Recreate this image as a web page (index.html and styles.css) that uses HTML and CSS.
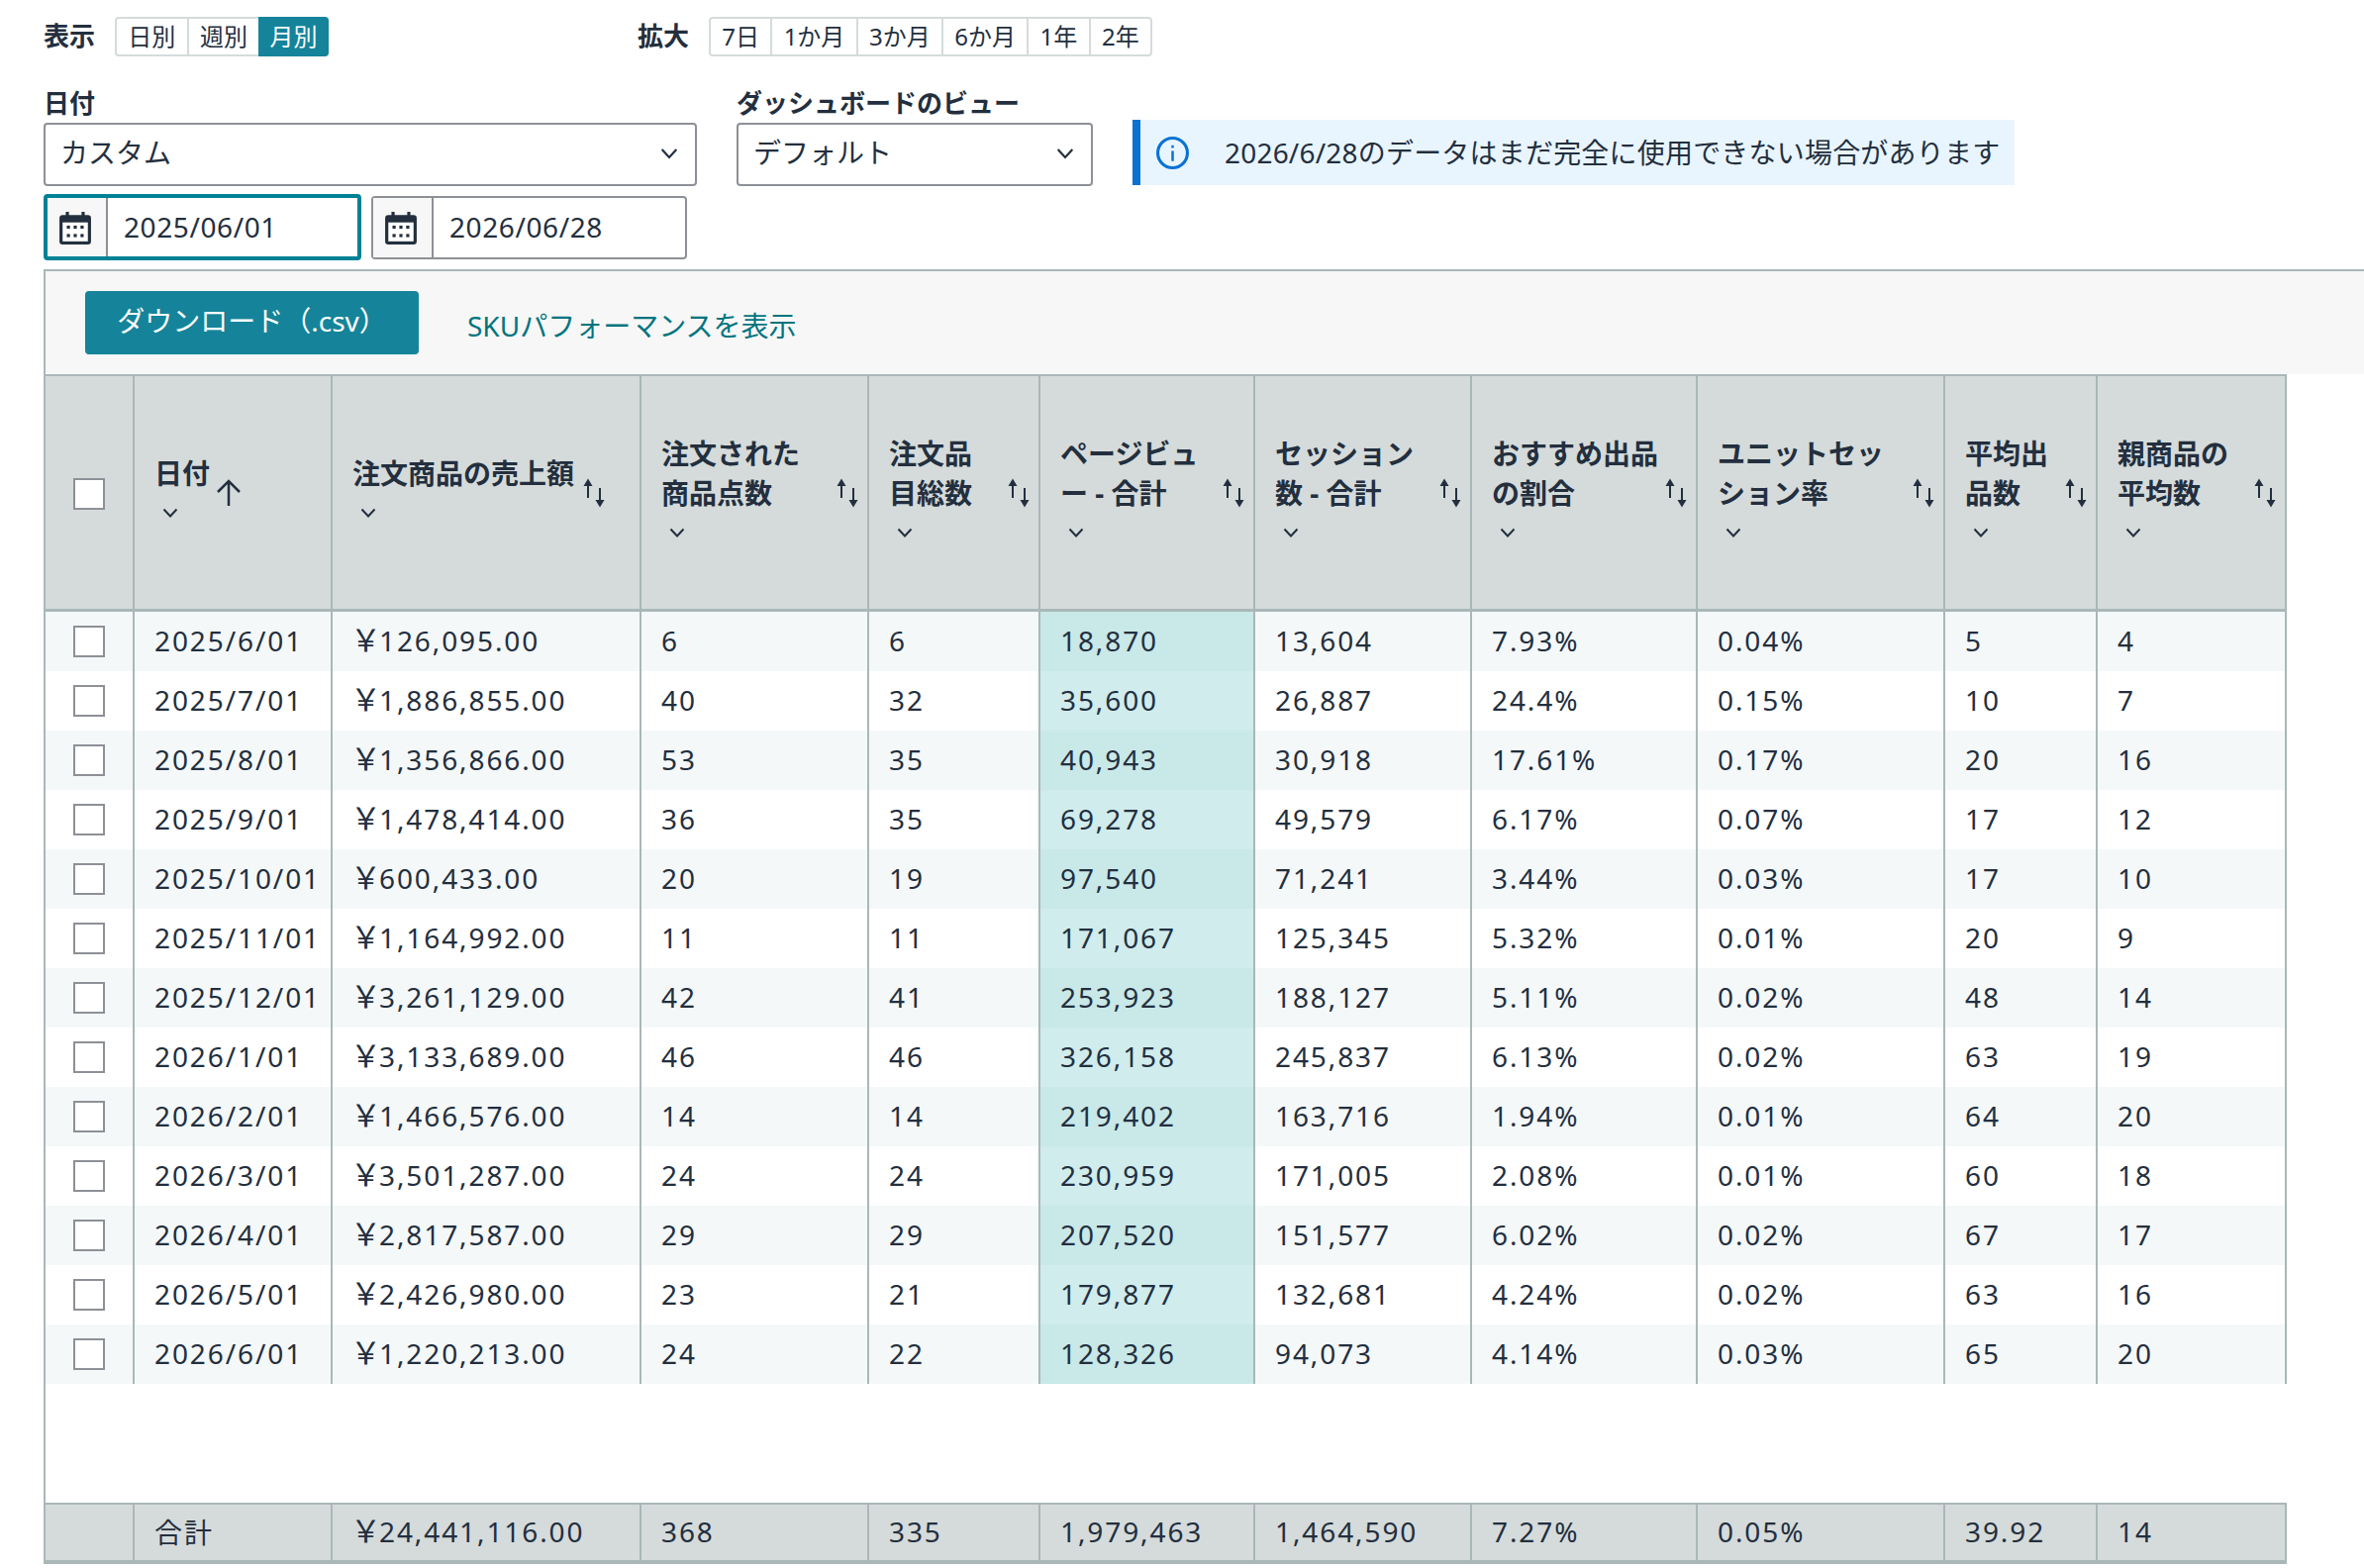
FILE: index.html
```html
<!DOCTYPE html>
<html lang="ja">
<head>
    <meta charset="UTF-8">
    <title>ビジネスレポート</title>
    <link rel="stylesheet" href="styles.css">
</head>
<body>

    <svg class="sprites" width="0" height="0">
        <symbol id="chevron" viewBox="0 0 16 10">
            <path d="M1.5 1.5 L8 8.5 L14.5 1.5" fill="none" stroke="currentColor" stroke-width="2"/>
        </symbol>
        <symbol id="sort" viewBox="0 0 24 30">
            <path d="M6 20 V6" fill="none" stroke="currentColor" stroke-width="2"/>
            <path d="M1.5 8 L6 0.500 L10.5 8 Z" fill="currentColor"/>
            <path d="M18 10 V24" fill="none" stroke="currentColor" stroke-width="2"/>
            <path d="M13.5 22 L18 29.500 L22.5 22 Z" fill="currentColor"/>
        </symbol>
        <symbol id="calendar" viewBox="0 0 32 32">
            <path d="M7 1 h3 v3 h12 v-3 h3 v3 h3 a3 3 0 0 1 3 3 v22 a3 3 0 0 1 -3 3 h-24 a3 3 0 0 1 -3 -3 v-22 a3 3 0 0 1 3 -3 h3 Z" fill="#232f3e"/>
            <rect x="4" y="11" width="24" height="18" fill="#fff"/>
            <g fill="#232f3e">
                <rect x="8" y="14" width="3" height="3"/><rect x="14.500" y="14" width="3" height="3"/><rect x="21" y="14" width="3" height="3"/>
                <rect x="8" y="22" width="3" height="3"/><rect x="14.500" y="22" width="3" height="3"/><rect x="21" y="22" width="3" height="3"/>
            </g>
        </symbol>
    </svg>

    <!-- View and zoom -->
    <div class="toolbar">
        <div class="toolbar-group view-group">
            <span class="toolbar-label">表示</span>
            <div class="segments">
                <span class="seg">日別</span>
                <span class="seg">週別</span>
                <span class="seg active">月別</span>
            </div>
        </div>
        <div class="toolbar-group">
            <span class="toolbar-label">拡大</span>
            <div class="segments">
                <span class="seg">7日</span>
                <span class="seg">1か月</span>
                <span class="seg">3か月</span>
                <span class="seg">6か月</span>
                <span class="seg">1年</span>
                <span class="seg">2年</span>
            </div>
        </div>
    </div>

    <!-- Filters -->
    <div class="filters">
        <div class="date-filter">
            <label class="field-label">日付</label>
            <div class="select wide">カスタム<svg class="select-arrow"><use href="#chevron"/></svg></div>
            <div class="date-row">
                <div class="date-input focused">
                    <span class="date-icon"><svg class="calendar"><use href="#calendar"/></svg></span>
                    <span class="date-value">2025/06/01</span>
                </div>
                <div class="date-input">
                    <span class="date-icon"><svg class="calendar"><use href="#calendar"/></svg></span>
                    <span class="date-value">2026/06/28</span>
                </div>
            </div>
        </div>
        <div class="view-filter">
            <label class="field-label">ダッシュボードのビュー</label>
            <div class="select narrow">デフォルト<svg class="select-arrow"><use href="#chevron"/></svg></div>
        </div>
        <div class="notice">
            <svg class="notice-icon" viewBox="0 0 32 32">
                <circle cx="16" cy="16" r="14.500" fill="none" stroke="#0972d3" stroke-width="3"/>
                <rect x="14.800" y="14" width="2.400" height="10" fill="#0972d3"/>
                <rect x="14.800" y="8.500" width="2.400" height="2.600" fill="#0972d3"/>
            </svg>
            <span class="notice-text">2026/6/28のデータはまだ完全に使用できない場合があります</span>
        </div>
    </div>

    <!-- Report -->
    <div class="report">
        <div class="report-actions">
            <button class="download">ダウンロード（.csv）</button>
            <a class="sku-link">SKUパフォーマンスを表示</a>
        </div>
        <table class="report-table">
            <colgroup>
                <col class="c-check"><col class="c-date"><col class="c-sales"><col class="c-items"><col class="c-total">
                <col class="c-views"><col class="c-sessions"><col class="c-offer"><col class="c-rate"><col class="c-avg"><col class="c-parent">
            </colgroup>
            <thead>
                <tr>
                    <th class="check-cell"><input type="checkbox"></th>
                    <th><div class="head"><div class="head-label fit">日付<svg class="head-chevron"><use href="#chevron"/></svg></div>
                        <svg class="sorted" viewBox="0 0 26 28"><path d="M13 27 V2 M2 13 L13 2 L24 13" fill="none" stroke="currentColor" stroke-width="2.500"/></svg></div></th>
                    <th><div class="head"><div class="head-label fit">注文商品の売上額<svg class="head-chevron"><use href="#chevron"/></svg></div><svg class="sort"><use href="#sort"/></svg></div></th>
                    <th><div class="head"><div class="head-label">注文された<br>商品点数<svg class="head-chevron"><use href="#chevron"/></svg></div><svg class="sort"><use href="#sort"/></svg></div></th>
                    <th><div class="head"><div class="head-label">注文品<br>目総数<svg class="head-chevron"><use href="#chevron"/></svg></div><svg class="sort"><use href="#sort"/></svg></div></th>
                    <th><div class="head"><div class="head-label">ページビュ<br>ー - 合計<svg class="head-chevron"><use href="#chevron"/></svg></div><svg class="sort"><use href="#sort"/></svg></div></th>
                    <th><div class="head"><div class="head-label">セッション<br>数 - 合計<svg class="head-chevron"><use href="#chevron"/></svg></div><svg class="sort"><use href="#sort"/></svg></div></th>
                    <th><div class="head"><div class="head-label">おすすめ出品<br>の割合<svg class="head-chevron"><use href="#chevron"/></svg></div><svg class="sort"><use href="#sort"/></svg></div></th>
                    <th><div class="head"><div class="head-label">ユニットセッ<br>ション率<svg class="head-chevron"><use href="#chevron"/></svg></div><svg class="sort"><use href="#sort"/></svg></div></th>
                    <th><div class="head"><div class="head-label">平均出<br>品数<svg class="head-chevron"><use href="#chevron"/></svg></div><svg class="sort"><use href="#sort"/></svg></div></th>
                    <th><div class="head"><div class="head-label">親商品の<br>平均数<svg class="head-chevron"><use href="#chevron"/></svg></div><svg class="sort"><use href="#sort"/></svg></div></th>
                </tr>
            </thead>
            <tbody>
                <tr><td class="check-cell"><input type="checkbox"></td><td>2025/6/01</td><td><span class="yen">￥</span>126,095.00</td><td>6</td><td>6</td><td class="hl">18,870</td><td>13,604</td><td>7.93%</td><td>0.04%</td><td>5</td><td>4</td></tr>
                <tr><td class="check-cell"><input type="checkbox"></td><td>2025/7/01</td><td><span class="yen">￥</span>1,886,855.00</td><td>40</td><td>32</td><td class="hl">35,600</td><td>26,887</td><td>24.4%</td><td>0.15%</td><td>10</td><td>7</td></tr>
                <tr><td class="check-cell"><input type="checkbox"></td><td>2025/8/01</td><td><span class="yen">￥</span>1,356,866.00</td><td>53</td><td>35</td><td class="hl">40,943</td><td>30,918</td><td>17.61%</td><td>0.17%</td><td>20</td><td>16</td></tr>
                <tr><td class="check-cell"><input type="checkbox"></td><td>2025/9/01</td><td><span class="yen">￥</span>1,478,414.00</td><td>36</td><td>35</td><td class="hl">69,278</td><td>49,579</td><td>6.17%</td><td>0.07%</td><td>17</td><td>12</td></tr>
                <tr><td class="check-cell"><input type="checkbox"></td><td>2025/10/01</td><td><span class="yen">￥</span>600,433.00</td><td>20</td><td>19</td><td class="hl">97,540</td><td>71,241</td><td>3.44%</td><td>0.03%</td><td>17</td><td>10</td></tr>
                <tr><td class="check-cell"><input type="checkbox"></td><td>2025/11/01</td><td><span class="yen">￥</span>1,164,992.00</td><td>11</td><td>11</td><td class="hl">171,067</td><td>125,345</td><td>5.32%</td><td>0.01%</td><td>20</td><td>9</td></tr>
                <tr><td class="check-cell"><input type="checkbox"></td><td>2025/12/01</td><td><span class="yen">￥</span>3,261,129.00</td><td>42</td><td>41</td><td class="hl">253,923</td><td>188,127</td><td>5.11%</td><td>0.02%</td><td>48</td><td>14</td></tr>
                <tr><td class="check-cell"><input type="checkbox"></td><td>2026/1/01</td><td><span class="yen">￥</span>3,133,689.00</td><td>46</td><td>46</td><td class="hl">326,158</td><td>245,837</td><td>6.13%</td><td>0.02%</td><td>63</td><td>19</td></tr>
                <tr><td class="check-cell"><input type="checkbox"></td><td>2026/2/01</td><td><span class="yen">￥</span>1,466,576.00</td><td>14</td><td>14</td><td class="hl">219,402</td><td>163,716</td><td>1.94%</td><td>0.01%</td><td>64</td><td>20</td></tr>
                <tr><td class="check-cell"><input type="checkbox"></td><td>2026/3/01</td><td><span class="yen">￥</span>3,501,287.00</td><td>24</td><td>24</td><td class="hl">230,959</td><td>171,005</td><td>2.08%</td><td>0.01%</td><td>60</td><td>18</td></tr>
                <tr><td class="check-cell"><input type="checkbox"></td><td>2026/4/01</td><td><span class="yen">￥</span>2,817,587.00</td><td>29</td><td>29</td><td class="hl">207,520</td><td>151,577</td><td>6.02%</td><td>0.02%</td><td>67</td><td>17</td></tr>
                <tr><td class="check-cell"><input type="checkbox"></td><td>2026/5/01</td><td><span class="yen">￥</span>2,426,980.00</td><td>23</td><td>21</td><td class="hl">179,877</td><td>132,681</td><td>4.24%</td><td>0.02%</td><td>63</td><td>16</td></tr>
                <tr><td class="check-cell"><input type="checkbox"></td><td>2026/6/01</td><td><span class="yen">￥</span>1,220,213.00</td><td>24</td><td>22</td><td class="hl">128,326</td><td>94,073</td><td>4.14%</td><td>0.03%</td><td>65</td><td>20</td></tr>
                <tr class="spacer"><td colspan="11"></td></tr>
            </tbody>
            <tfoot>
                <tr>
                    <td class="check-cell"></td><td>合計</td><td><span class="yen">￥</span>24,441,116.00</td><td>368</td><td>335</td><td>1,979,463</td><td>1,464,590</td><td>7.27%</td><td>0.05%</td><td>39.92</td><td>14</td>
                </tr>
            </tfoot>
        </table>
    </div>

</body>
</html>
```

FILE: styles.css
```css
* {
    box-sizing: border-box;
}

body {
    margin: 0;
    padding: 17px 0 0 44px;
    background: #fff;
    color: #232f3e;
    font-family: "Noto Sans", "Noto Sans CJK JP", sans-serif;
    font-size: 28px;
}

.sprites {
    position: absolute;
}

/* View and zoom */
.toolbar {
    display: flex;
    height: 40px;
}

.toolbar-group {
    display: flex;
    align-items: center;
}

.view-group {
    width: 600px;
}

.toolbar-label {
    width: 72px;
    padding-bottom: 4px;
    font-size: 26px;
    font-weight: 700;
}

.segments {
    display: flex;
    height: 40px;
    border: 2px solid #d5dbdb;
    border-radius: 4px;
}

.seg {
    display: flex;
    align-items: center;
    justify-content: center;
    padding: 0 11.300px 3px;
    border-left: 2px solid #d5dbdb;
    font-size: 24px;
}

.seg:first-child {
    border-left: none;
}

.seg.active {
    margin: -2px -2px -2px 0;
    border-left: none;
    border-radius: 0 4px 4px 0;
    background: #15849a;
    color: #fff;
}

/* Filters */
.filters {
    display: flex;
    align-items: flex-start;
    margin-top: 30px;
}

.date-filter {
    width: 700px;
}

.view-filter {
    width: 400px;
}

.field-label {
    display: block;
    height: 37px;
    font-size: 26px;
    font-weight: 700;
    line-height: 34px;
}

.select {
    display: flex;
    align-items: center;
    justify-content: space-between;
    height: 64px;
    padding: 0 17px 6px 15px;
    border: 2px solid #8d9096;
    border-radius: 4px;
    background: #fff;
}

.select.wide {
    width: 660px;
}

.select.narrow {
    width: 360px;
}

.select-arrow {
    width: 18px;
    height: 12px;
    margin-top: 4px;
}

.date-row {
    display: flex;
    align-items: center;
    gap: 10px;
    margin-top: 8px;
}

.date-input {
    display: flex;
    width: 319px;
    height: 64px;
    border: 2px solid #8d9096;
    border-radius: 4px;
}

.date-input.focused {
    width: 321px;
    height: 67px;
    border: 4px solid #008296;
}

.date-icon {
    display: flex;
    align-items: center;
    justify-content: center;
    width: 61px;
    padding-right: 3px;
    border-right: 2px solid #8d9096;
    background: #f7f7f7;
}

.calendar {
    width: 34px;
    height: 34px;
    flex: none;
}

.date-value {
    padding-left: 16px;
    letter-spacing: 0.6px;
    line-height: 58px;
}

.notice {
    display: flex;
    align-items: center;
    width: 891px;
    height: 66px;
    margin-top: 34px;
    padding-left: 16px;
    border-left: 8px solid #0972d3;
    background: #e9f5fe;
    letter-spacing: 0.2px;
    white-space: nowrap;
}

.notice-icon {
    width: 33px;
    height: 33px;
    margin-right: 36px;
    flex: none;
}

.notice-text {
    padding-bottom: 2px;
}

/* Report */
.report {
    margin-top: 9px;
    border-top: 2px solid #aab7b8;
    border-left: 2px solid #aab7b8;
}

.report-actions {
    display: flex;
    align-items: flex-start;
    height: 104px;
    padding: 20px 0 0 40px;
    background: #f7f7f7;
}

.download {
    width: 337px;
    height: 64px;
    padding: 0 0 6px;
    border: none;
    border-radius: 4px;
    background: #15849a;
    color: #fff;
    font: inherit;
}

.sku-link {
    margin: 14px 0 0 49px;
    color: #00747f;
}

.report-table {
    table-layout: fixed;
    width: 2264px;
    border-collapse: separate;
    border-spacing: 0;
}

.c-check { width: 90px; }
.c-date { width: 200px; }
.c-sales { width: 312px; }
.c-items { width: 230px; }
.c-total { width: 173px; }
.c-views { width: 217px; }
.c-sessions { width: 219px; }
.c-offer { width: 228px; }
.c-rate { width: 250px; }
.c-avg { width: 154px; }
.c-parent { width: 191px; }

th {
    height: 240px;
    padding: 0 8px 0 20px;
    border-top: 2px solid #aab7b8;
    border-right: 2px solid #aab7b8;
    border-bottom: 3px solid #aab7b8;
    background: #d5dbdb;
    font-size: 28px;
    font-weight: 700;
    line-height: 40px;
    text-align: left;
}

.head {
    display: flex;
    align-items: center;
}

.head-label {
    flex: 1;
    min-width: 0;
    white-space: nowrap;
}

.head-label.fit {
    flex: none;
}

.head-chevron {
    display: block;
    width: 16px;
    height: 10px;
    margin: 15px 0 15px 8px;
}

.sort {
    width: 24px;
    height: 30px;
    margin-left: 8px;
    flex: none;
}

.sorted {
    width: 26px;
    height: 28px;
    margin-left: 6px;
    flex: none;
}

td {
    height: 60px;
    padding: 0 8px 2px 20px;
    border-right: 2px solid #aab7b8;
    letter-spacing: 1.9px;
    white-space: nowrap;
}

tbody tr:nth-child(odd) td {
    background: #f4f8f9;
}

td.hl {
    background: #d0ecec;
}

tbody tr:nth-child(odd) td.hl {
    background: #c9e8e8;
}

tbody tr.spacer td {
    height: 120px;
    border-right: none;
    background: #fff;
}

tfoot td {
    height: 62px;
    border-top: 2px solid #aab7b8;
    border-bottom: 4px solid #aab7b8;
    background: #d5dbdb;
}

.yen {
    display: inline-block;
    width: 29px;
    margin-left: -2px;
    font-family: "Noto Sans CJK JP", sans-serif;
    font-size: 31px;
    letter-spacing: 0;
    line-height: 1;
}

th.check-cell,
td.check-cell {
    padding: 0 0 0 28px;
}

th input[type="checkbox"] {
    margin-top: 2px;
}

input[type="checkbox"] {
    display: block;
    width: 32px;
    height: 32px;
    margin: 0;
    appearance: none;
    border: 2px solid #8d9096;
    background: #fff;
}
```
